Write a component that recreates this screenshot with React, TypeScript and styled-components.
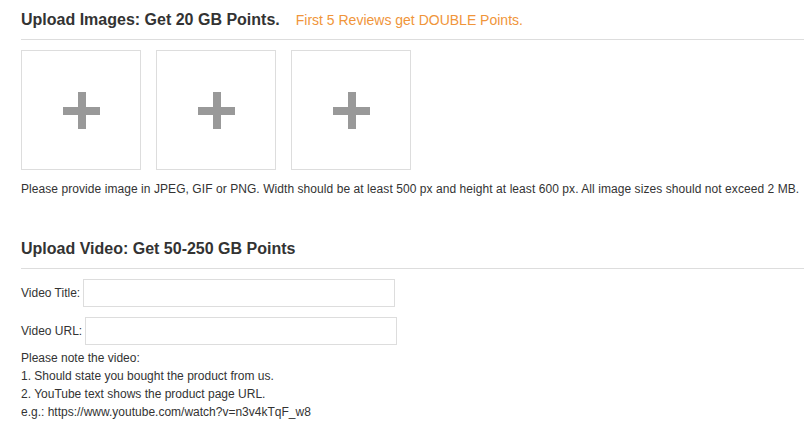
import styled, { createGlobalStyle } from 'styled-components'

const GlobalStyle = createGlobalStyle`
  body {
    margin: 0;
    background: #fff;
    font-family: Arial, "Liberation Sans", sans-serif;
    color: #333;
  }
`

const Page = styled.div`
  padding: 9px 0 0 21px;
`

const Section = styled.section`
  margin-bottom: 0;
`

const SectionHeader = styled.div`
  display: flex;
  align-items: baseline;
  gap: 16px;
  padding-bottom: 9px;
  border-bottom: 1px solid #ddd;
`

const Title = styled.h2`
  margin: 0;
  font-size: 16px;
  line-height: 21px;
  font-weight: bold;
  color: #333;
`

const Promo = styled.span`
  font-size: 14px;
  color: #f0953a;
`

const ImageRow = styled.div`
  display: flex;
  gap: 15px;
  margin-top: 10px;
`

const ImageSlot = styled.button`
  width: 120px;
  height: 120px;
  box-sizing: border-box;
  border: 1px solid #ddd;
  background: #fff;
  padding: 0;
  display: flex;
  align-items: center;
  justify-content: center;
  cursor: pointer;
`

const Hint = styled.p`
  margin: 10px 0 0;
  font-size: 12px;
  line-height: 18px;
  letter-spacing: 0.065px;
  color: #333;
  white-space: nowrap;
`

const VideoSection = styled(Section)`
  margin-top: 40px;
`

const Fields = styled.div`
  display: flex;
  flex-direction: column;
  gap: 10px;
  margin-top: 10px;
`

const FieldRow = styled.label`
  display: flex;
  align-items: center;
  gap: 3px;
  font-size: 12px;
  color: #333;
`

const TextInput = styled.input`
  width: 312px;
  height: 28px;
  box-sizing: border-box;
  border: 1px solid #ddd;
  padding: 0 6px;
  font-size: 12px;
  outline: none;
`

const Notes = styled.div`
  margin-top: 4px;
  font-size: 12px;
  line-height: 18px;
  color: #333;
`

const PlusIcon = () => (
  <svg width="37" height="37" viewBox="0 0 37 37">
    <rect x="0" y="15" width="37" height="8" fill="#999" />
    <rect x="15" y="0" width="8" height="37" fill="#999" />
  </svg>
)

export default function App() {
  return (
    <Page>
      <GlobalStyle />
      <Section>
        <SectionHeader>
          <Title>Upload Images: Get 20 GB Points.</Title>
          <Promo>First 5 Reviews get DOUBLE Points.</Promo>
        </SectionHeader>
        <ImageRow>
          {[0, 1, 2].map((i) => (
            <ImageSlot key={i} aria-label="Add image">
              <PlusIcon />
            </ImageSlot>
          ))}
        </ImageRow>
        <Hint>
          Please provide image in JPEG, GIF or PNG. Width should be at least 500 px and height at least 600 px. All image sizes should not exceed 2 MB.
        </Hint>
      </Section>

      <VideoSection>
        <SectionHeader>
          <Title>Upload Video: Get 50-250 GB Points</Title>
        </SectionHeader>
        <Fields>
          <FieldRow>
            Video Title:
            <TextInput type="text" />
          </FieldRow>
          <FieldRow>
            Video URL:
            <TextInput type="text" />
          </FieldRow>
        </Fields>
        <Notes>
          <div>Please note the video:</div>
          <div>1. Should state you bought the product from us.</div>
          <div>2. YouTube text shows the product page URL.</div>
          <div>e.g.: https://www.youtube.com/watch?v=n3v4kTqF_w8</div>
        </Notes>
      </VideoSection>
    </Page>
  )
}
